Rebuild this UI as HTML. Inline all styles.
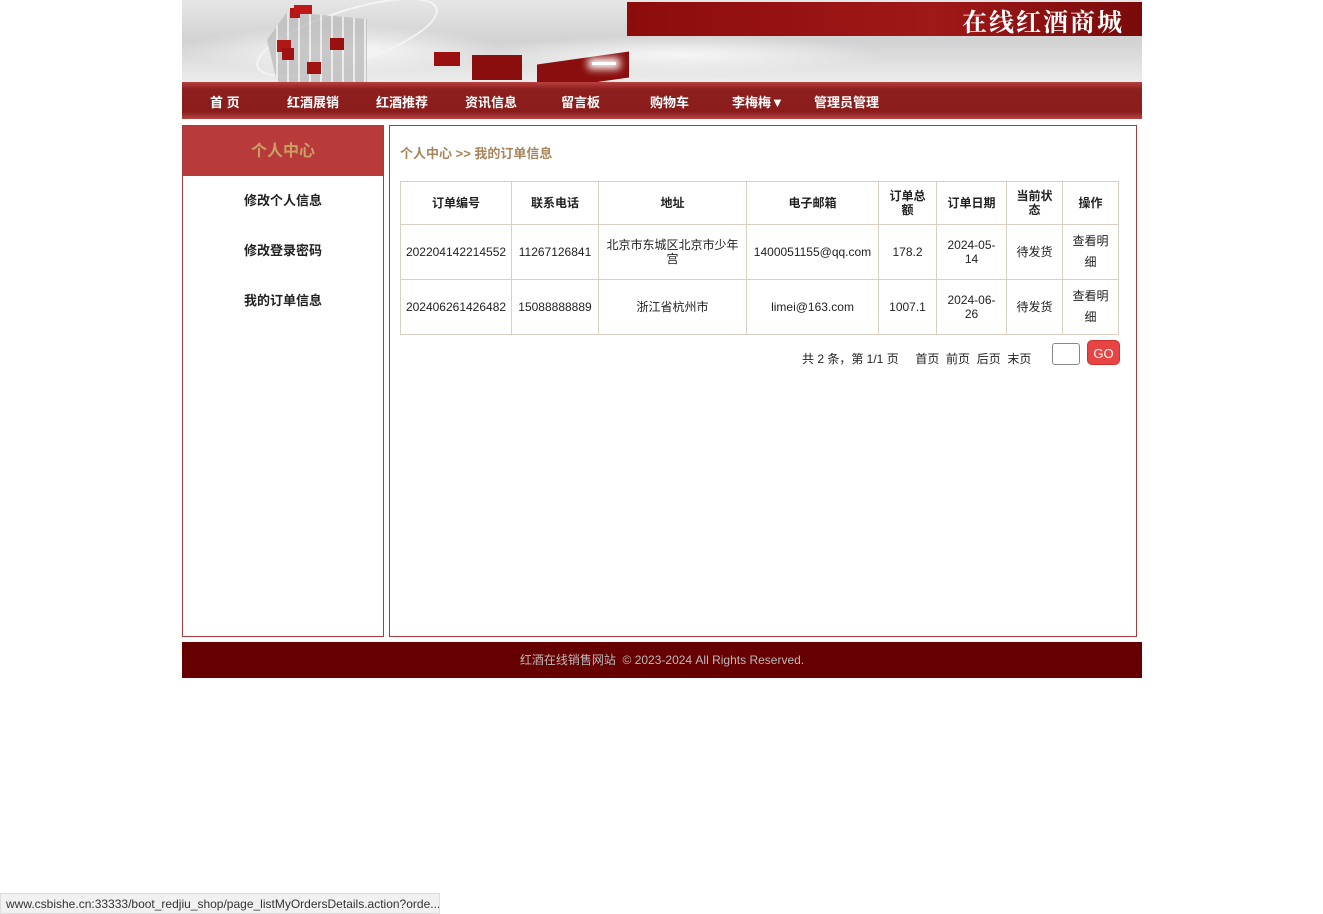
<!DOCTYPE html>
<html><head><meta charset="utf-8"><style>
*{margin:0;padding:0;box-sizing:border-box}
body{width:1323px;height:914px;background:#fff;font-family:"Liberation Sans","Noto Sans CJK SC",sans-serif;font-size:12px;color:#222;position:relative;overflow:hidden}
.abs{position:absolute}
.banner{left:182px;top:0;width:960px;height:82px;background:linear-gradient(180deg,#e6e6e6,#d2d2d2 50%,#ececec);overflow:hidden}
.nav{left:182px;top:82px;width:960px;height:37px;background:linear-gradient(180deg,#b84040 0%,#8e1f1f 20%,#8a1c1c 80%,#b54545 100%)}
.nav span{position:absolute;top:10px;color:#fff;font-weight:bold;font-size:13px}
.side{left:182px;top:125px;width:202px;height:512px;border:1px solid #a83a3a}
.sidehd{height:50px;background:#b83a3a;color:#c9a063;font-size:16px;font-weight:bold;text-align:center;line-height:52px}
.side a{display:block;text-align:center;font-weight:bold;font-size:13px;color:#222;height:50px;line-height:50px}
.main{left:389px;top:125px;width:748px;height:512px;border:1px solid #a83a3a}
table{position:absolute;left:400px;top:181px;border-collapse:collapse;width:718px;table-layout:fixed}
td,th{border:1px solid #d9d0c0;text-align:center;font-size:12px;line-height:14px;padding:0 5px}
th{height:43px;font-weight:bold}
td{height:55px}
.foot{left:182px;top:642px;width:960px;height:36px;background:#660000;color:#bbb;text-align:center;line-height:37px;font-size:12px}
</style></head><body>
<div class="abs banner">
<div class="abs" style="left:0;top:25px;width:320px;height:50px;background:radial-gradient(ellipse,#fafafa,rgba(255,255,255,0) 70%)"></div>
<div class="abs" style="left:300px;top:35px;width:400px;height:40px;background:radial-gradient(ellipse,#f6f6f6,rgba(255,255,255,0) 70%)"></div>
<div class="abs" style="left:70px;top:10px;width:190px;height:55px;border:2px solid #f4f4f4;border-radius:50%;transform:rotate(-18deg)"></div>
<div class="abs" style="left:85px;top:12px;width:100px;height:70px;background:repeating-linear-gradient(90deg,#bdbdbd 0 9px,#ececec 9px 11px),#ccc;opacity:.8;clip-path:polygon(20% 0,100% 10%,100% 100%,10% 100%,0 40%)"></div>
<div class="abs" style="left:108px;top:8px;width:10px;height:10px;background:#b01818"></div>
<div class="abs" style="left:95px;top:40px;width:14px;height:12px;background:#b01818"></div>
<div class="abs" style="left:112px;top:5px;width:18px;height:9px;background:#c01818"></div>
<div class="abs" style="left:148px;top:38px;width:14px;height:12px;background:#9a1010"></div>
<div class="abs" style="left:125px;top:62px;width:14px;height:12px;background:#a01212"></div>
<div class="abs" style="left:100px;top:48px;width:12px;height:12px;background:#a01212"></div>
<div class="abs" style="left:252px;top:52px;width:26px;height:14px;background:#9a1010"></div>
<div class="abs" style="left:290px;top:55px;width:50px;height:25px;background:#8a0e0e"></div>
<div class="abs" style="left:355px;top:58px;width:92px;height:26px;background:#8a0e0e;transform:skewY(-8deg)"></div>
<div class="abs" style="left:410px;top:62px;width:24px;height:3px;background:#fff;box-shadow:0 0 8px 4px #fff"></div>
<div class="abs" style="left:445px;top:2px;width:515px;height:34px;background:linear-gradient(90deg,#8c0c0c,#a01818 60%,#7a0a0a);"></div>
<div class="abs" style="right:18px;top:3px;color:#fff;font-family:'Noto Serif CJK SC',serif;font-weight:bold;font-size:25px;letter-spacing:2px">在线红酒商城</div>
</div>
<div class="abs nav">
<span style="left:28px">首 页</span><span style="left:105px">红酒展销</span><span style="left:194px">红酒推荐</span><span style="left:283px">资讯信息</span><span style="left:379px">留言板</span><span style="left:468px">购物车</span><span style="left:550px">李梅梅▼</span><span style="left:632px">管理员管理</span>
</div>
<div class="abs side"><div class="sidehd">个人中心</div><a>修改个人信息</a><a>修改登录密码</a><a>我的订单信息</a></div>
<div class="abs main"></div>
<div class="abs" style="left:400px;top:143px;color:#a8855a;font-weight:bold;font-size:13px">个人中心 &gt;&gt; 我的订单信息</div>
<table>
<colgroup><col style="width:111px"><col style="width:87px"><col style="width:148px"><col style="width:132px"><col style="width:58px"><col style="width:70px"><col style="width:56px"><col style="width:56px"></colgroup>
<tr><th>订单编号</th><th>联系电话</th><th>地址</th><th>电子邮箱</th><th style="padding:0 6px">订单总额</th><th>订单日期</th><th style="padding:0 6px">当前状态</th><th>操作</th></tr>
<tr><td style="padding:0 2px">202204142214552</td><td style="padding:0 2px">11267126841</td><td>北京市东城区北京市少年宫</td><td style="padding:0 2px">1400051155@qq.com</td><td>178.2</td><td style="padding:0 9px">2024-05-14</td><td>待发货</td><td style="line-height:21px;padding:0 6px">查看明细</td></tr>
<tr><td style="padding:0 2px">202406261426482</td><td style="padding:0 2px">15088888889</td><td>浙江省杭州市</td><td>limei@163.com</td><td>1007.1</td><td style="padding:0 9px">2024-06-26</td><td>待发货</td><td style="line-height:21px;padding:0 6px">查看明细</td></tr>
</table>
<div class="abs" style="left:802px;top:350px;white-space:nowrap">共 2 条，第 1/1 页 &nbsp; &nbsp; 首页 &nbsp;前页 &nbsp;后页 &nbsp;末页</div>
<div class="abs" style="left:1052px;top:343px;width:28px;height:22px;border:1px solid #888;border-radius:3px"></div>
<div class="abs" style="left:1087px;top:340px;width:33px;height:25px;background:#e84444;border:1px solid #c33;border-radius:5px;color:#fff;text-align:center;line-height:25px;font-size:13px">GO</div>
<div class="abs foot">红酒在线销售网站 &nbsp;© 2023-2024 All Rights Reserved.</div>
<div class="abs" style="left:0;top:893px;width:440px;height:21px;background:#f1f1f1;border:1px solid #ddd;color:#333;font-size:12px;line-height:20px;padding-left:5px;white-space:nowrap;overflow:hidden">www.csbishe.cn:33333/boot_redjiu_shop/page_listMyOrdersDetails.action?orde...</div>
</body></html>
